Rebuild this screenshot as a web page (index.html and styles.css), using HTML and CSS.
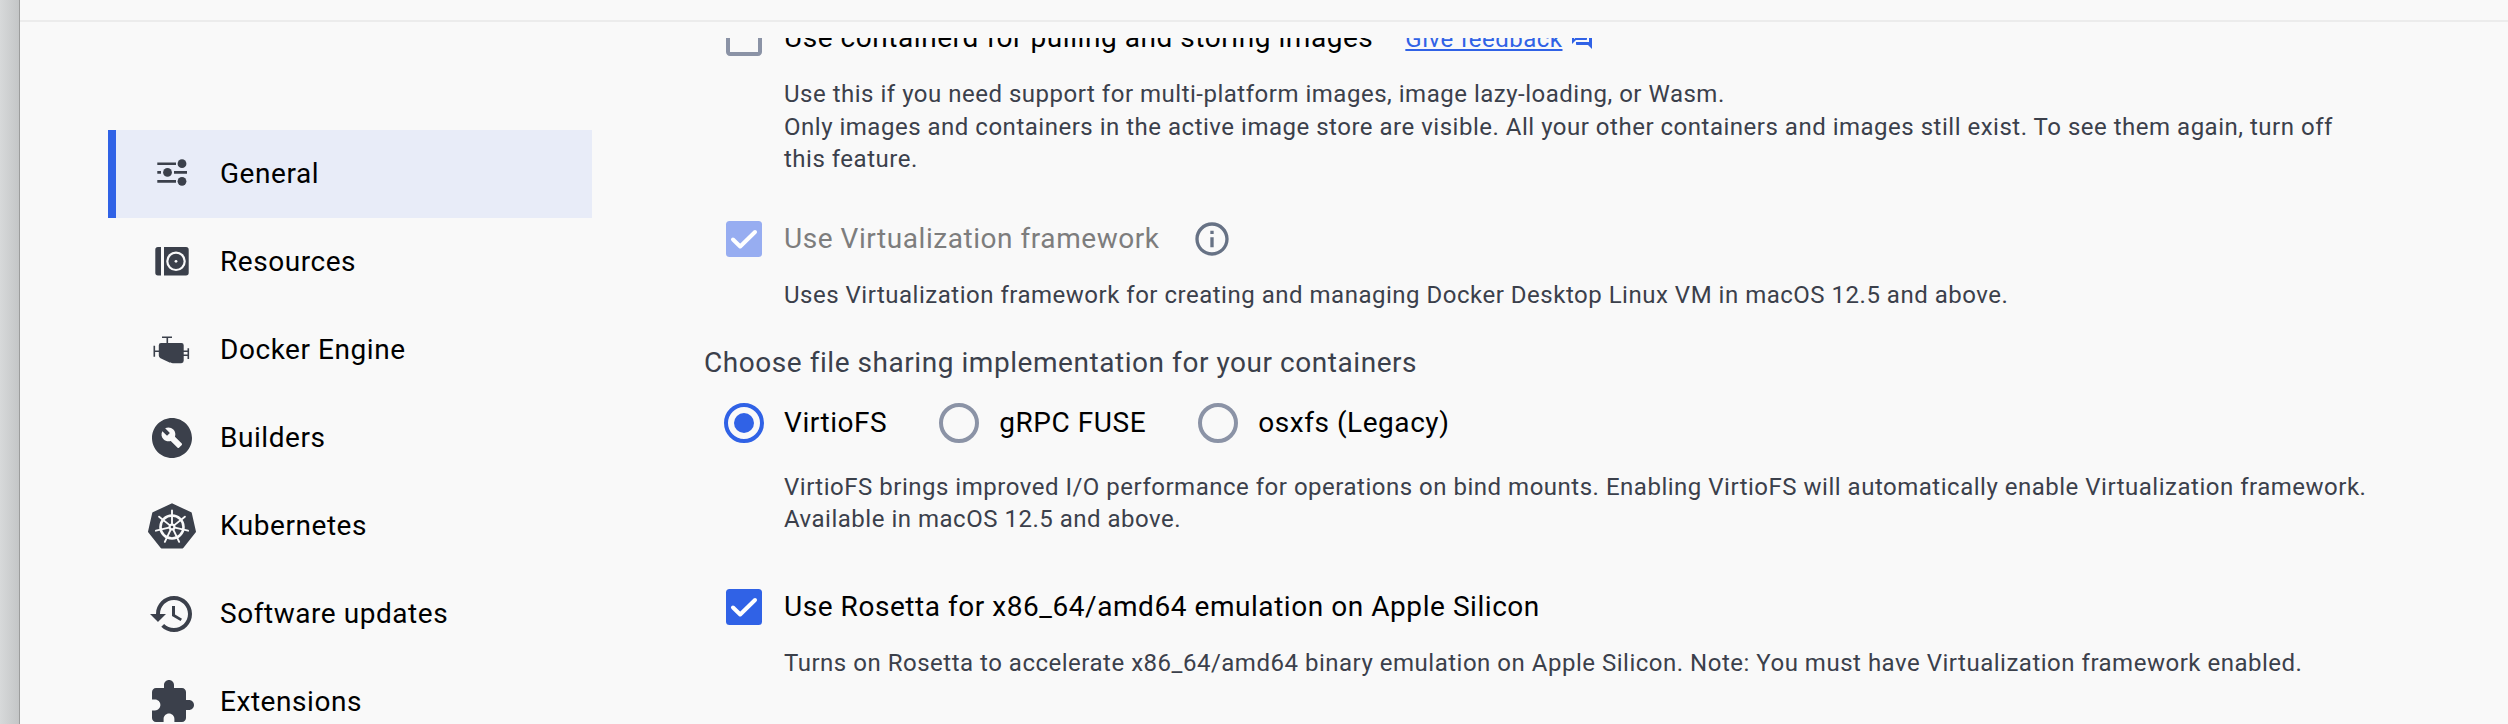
FILE: index.html
```html
<!DOCTYPE html>
<html lang="en">
<head>
<meta charset="utf-8">
<title>Settings</title>
<link rel="stylesheet" href="styles.css">
</head>
<body>
<div class="desktop"></div>
<div class="window">
  <header class="titlebar"></header>
  <div class="body">
    <nav class="nav">
      <a class="nav-item active"><span class="nav-icon"><svg viewBox="0 0 48 48" width="48" height="48"><g fill="#3b404b"><path d="M9.300 12.400H28v2.700H9.300zM9.300 30H28v2.700H9.300zM26 21.100h13v2.700H26zM9.300 21.100h3.700v2.700H9.300z"/><circle cx="34" cy="13.700" r="4.400"/><circle cx="19.500" cy="22.400" r="4.400"/><circle cx="34" cy="31.300" r="4.400"/></g></svg></span>General</a>
      <a class="nav-item"><span class="nav-icon"><svg viewBox="0 0 48 48" width="48" height="48"><g fill="#3b404b"><path d="M13 9v28.500h-3a2.700 2.700 0 0 1-2.700-2.700V11.700A2.700 2.700 0 0 1 10 9zM16 9h22a2.700 2.700 0 0 1 2.700 2.700v23.100a2.700 2.700 0 0 1-2.700 2.700H16z"/></g><circle cx="28" cy="23.300" r="8.700" fill="none" stroke="#f9f9fa" stroke-width="2.200"/><circle cx="28" cy="23.300" r="1.400" fill="#f9f9fa"/></svg></span>Resources</a>
      <a class="nav-item"><span class="nav-icon"><svg viewBox="0 0 48 48" width="48" height="48"><path fill="#3b404b" d="M13 17h20.500a2.200 2.200 0 0 1 2.200 2.200v15.600a2.400 2.400 0 0 1-2.400 2.400H25c-2 0-3-.4-4.500-1.200L12.500 32.200a3 3 0 0 1-1.700-2.700V19.200A2.200 2.200 0 0 1 13 17z"/><path fill="none" stroke="#3b404b" stroke-width="1.600" d="M14 11.300h10M19.300 11v7M6.300 19.700v11M6.300 25.200h5M40.300 22.300v10.800M35 25.300h5.300M35 29.300h5.300"/></svg></span>Docker Engine</a>
      <a class="nav-item"><span class="nav-icon"><svg viewBox="0 0 24 24" width="48" height="48"><path fill="#3b404b" fill-rule="evenodd" d="M12 2C6.480 2 2 6.480 2 12s4.480 10 10 10 10-4.480 10-10S17.520 2 12 2zm4.900 13.490-1.400 1.400c-.2.200-.51.200-.71 0l-3.410-3.410c-1.220.43-2.640.17-3.620-.81-1.110-1.110-1.300-2.790-.59-4.100l2.350 2.350 1.410-1.410-2.350-2.350c1.320-.71 2.990-.52 4.100.59.980.98 1.240 2.400.81 3.620l3.410 3.410c.19.190.19.510 0 .710z"/></svg></span>Builders</a>
      <a class="nav-item"><span class="nav-icon"><svg viewBox="0 0 48 48" width="48" height="48"><path fill="#3b404b" stroke="#3b404b" stroke-width="2" stroke-linejoin="round" d="M24 2.300 42.800 11.200 47 29.700 34.500 45.500H13.500L1 29.700 5.200 11.200z"/><g stroke="#f9f9fa" fill="none"><circle cx="24" cy="25" r="11.500" stroke-width="2.600"/><g stroke-width="1.900" stroke-linecap="round"><path id="spoke" d="M24 22V8.500"/><use href="#spoke" transform="rotate(51.430 24 25)"/><use href="#spoke" transform="rotate(102.860 24 25)"/><use href="#spoke" transform="rotate(154.290 24 25)"/><use href="#spoke" transform="rotate(205.710 24 25)"/><use href="#spoke" transform="rotate(257.140 24 25)"/><use href="#spoke" transform="rotate(308.570 24 25)"/></g></g><circle cx="24" cy="25" r="3.500" fill="#f9f9fa"/><circle cx="24" cy="25" r="1.300" fill="#3b404b"/></svg></span>Kubernetes</a>
      <a class="nav-item"><span class="nav-icon"><svg viewBox="0 0 24 24" width="48" height="48"><path fill="#3b404b" d="M13 3c-4.970 0-9 4.030-9 9H1l3.890 3.890.07.14L9 12H6c0-3.870 3.130-7 7-7s7 3.130 7 7-3.130 7-7 7c-1.930 0-3.680-.79-4.940-2.060l-1.420 1.420C8.270 19.990 10.510 21 13 21c4.970 0 9-4.030 9-9s-4.030-9-9-9zm-1 5v5l4.280 2.540.72-1.210-3.500-2.080V8H12z"/></svg></span>Software updates</a>
      <a class="nav-item"><span class="nav-icon"><svg viewBox="0 0 24 24" width="48" height="48"><path fill="#3b404b" d="M20.500 11H19V7c0-1.100-.9-2-2-2h-4V3.500C13 2.120 11.880 1 10.500 1S8 2.120 8 3.500V5H4c-1.100 0-1.990.9-1.990 2v3.800H3.500c1.490 0 2.700 1.210 2.700 2.700s-1.210 2.700-2.700 2.700H2V20c0 1.100.9 2 2 2h3.800v-1.500c0-1.490 1.210-2.700 2.700-2.700 1.490 0 2.700 1.210 2.700 2.700V22H17c1.100 0 2-.9 2-2v-4h1.500c1.380 0 2.500-1.120 2.500-2.500S21.880 11 20.500 11z"/></svg></span>Extensions</a>
    </nav>
    <main class="content">
      <div class="scrolled">
        <div class="option">
          <span class="control"><svg viewBox="0 0 24 24" width="48" height="48"><path fill="#8b93a6" d="M19 5v14H5V5h14m0-2H5c-1.100 0-2 .9-2 2v14c0 1.100.9 2 2 2h14c1.100 0 2-.9 2-2V5c0-1.100-.9-2-2-2z"/></svg></span>
          <span class="label">Use containerd for pulling and storing images</span>
          <a class="feedback"><span class="feedback-text">Give feedback</span><svg viewBox="0 0 24 24" width="24" height="24"><path fill="#3062e6" d="M15 4v7H5.170L4 12.170V4h11m1-2H3c-.55 0-1 .45-1 1v14l4-4h10c.55 0 1-.45 1-1V3c0-.55-.45-1-1-1zm5 4h-2v9H6v2c0 .55.450 1 1 1h11l4 4V7c0-.55-.45-1-1-1z"/></svg></a>
        </div>
        <p class="desc desc-store">Use this if you need support for multi-platform images, image lazy-loading, or Wasm.<br>Only images and containers in the active image store are visible. All your other containers and images still exist. To see them again, turn off<br>this feature.</p>
        <div class="option">
          <span class="control"><svg viewBox="0 0 48 48" width="48" height="48"><rect x="6" y="6" width="36" height="36" rx="3.500" fill="#97adf1"/><path fill="none" stroke="#fff" stroke-width="4" stroke-linecap="round" stroke-linejoin="round" d="m13 24.500 7.200 7L35 17"/></svg></span>
          <span class="label muted">Use Virtualization framework</span>
          <svg class="info" viewBox="0 0 24 24" width="40" height="40"><path fill="#677285" d="M11 7h2v2h-2zm0 4h2v6h-2zm1-9C6.480 2 2 6.480 2 12s4.480 10 10 10 10-4.480 10-10S17.520 2 12 2zm0 18c-4.410 0-8-3.590-8-8s3.590-8 8-8 8 3.590 8 8-3.590 8-8 8z"/></svg>
        </div>
        <p class="desc desc-virt">Uses Virtualization framework for creating and managing Docker Desktop Linux VM in macOS 12.5 and above.</p>
        <h2 class="group-title">Choose file sharing implementation for your containers</h2>
        <div class="option radios">
          <span class="radio"><span class="control"><svg viewBox="0 0 48 48" width="48" height="48"><circle cx="24" cy="24" r="18" fill="none" stroke="#3062e6" stroke-width="4"/><circle cx="24" cy="24" r="10" fill="#3062e6"/></svg></span><span class="label">VirtioFS</span></span>
          <span class="radio"><span class="control"><svg viewBox="0 0 48 48" width="48" height="48"><circle cx="24" cy="24" r="18" fill="none" stroke="#8b93a6" stroke-width="4"/></svg></span><span class="label">gRPC FUSE</span></span>
          <span class="radio"><span class="control"><svg viewBox="0 0 48 48" width="48" height="48"><circle cx="24" cy="24" r="18" fill="none" stroke="#8b93a6" stroke-width="4"/></svg></span><span class="label">osxfs (Legacy)</span></span>
        </div>
        <p class="desc desc-fs">VirtioFS brings improved I/O performance for operations on bind mounts. Enabling VirtioFS will automatically enable Virtualization framework.<br>Available in macOS 12.5 and above.</p>
        <div class="option">
          <span class="control"><svg viewBox="0 0 48 48" width="48" height="48"><rect x="6" y="6" width="36" height="36" rx="3.500" fill="#3062e6"/><path fill="none" stroke="#fff" stroke-width="4" stroke-linecap="round" stroke-linejoin="round" d="m13 24.500 7.200 7L35 17"/></svg></span>
          <span class="label">Use Rosetta for x86_64/amd64 emulation on Apple Silicon</span>
        </div>
        <p class="desc desc-rosetta">Turns on Rosetta to accelerate x86_64/amd64 binary emulation on Apple Silicon. Note: You must have Virtualization framework enabled.</p>
      </div>
    </main>
  </div>
</div>
</body>
</html>
```
FILE: styles.css
```css
* { box-sizing: border-box; }
body {
  margin: 0;
  width: 2508px;
  height: 724px;
  overflow: hidden;
  display: flex;
  background: #f9f9f9;
  font-family: Roboto, "Liberation Sans", sans-serif;
  color: #000;
}
.desktop {
  width: 20px;
  flex: none;
  background: linear-gradient(90deg, #d7d9da, #c4c6c7);
  border-right: 1px solid #9c9d9d;
}
.window { flex: 1; min-width: 0; display: flex; flex-direction: column; height: 724px; }
.titlebar { height: 22px; flex: none; border-bottom: 2px solid #ececec; }
.body { flex: 1; min-height: 0; display: flex; padding-top: 16px; }
.nav { width: 484px; margin: 92px 0 0 88px; flex: none; }
.nav-item {
  display: flex;
  align-items: center;
  height: 88px;
  padding: 0 0 1px 40px;
  font-size: 28px;
  letter-spacing: 0.55px;
}
.nav-item.active { background: #e8ecf8; border-left: 8px solid #3062e6; padding-left: 32px; }
.nav-icon { width: 48px; margin: 1px 24px 0 0; display: flex; }
svg { display: block; flex: none; }
.content { flex: 1; min-width: 0; margin-left: 112px; overflow: hidden; }
.scrolled { margin-top: -24px; }
.option { display: flex; align-items: center; height: 48px; padding-left: 16px; }
.control { width: 48px; margin-right: 16px; flex: none; }
.label { font-size: 28px; letter-spacing: 0.55px; line-height: 48px; white-space: nowrap; }
.muted { color: #7d7d7d; }
.info { margin-left: 32px; }
.feedback { display: flex; align-items: center; margin-left: 32px; padding-top: 2px; color: #3062e6; }
.feedback-text { font-size: 24px; letter-spacing: 0.5px; text-decoration: underline; }
.feedback svg { margin-left: 7px; }
.desc {
  margin: 0 0 0 80px;
  font-size: 24px;
  line-height: 32.500px;
  letter-spacing: 0.51px;
  color: #3b404b;
  white-space: nowrap;
}
.desc-store { padding-top: 16px; height: 153px; }
.desc-virt { padding-top: 16px; height: 76px; }
.group-title { margin: 0; height: 60px; font-size: 28px; font-weight: 400; line-height: 48px; letter-spacing: 0.55px; color: #3b404b; white-space: nowrap; }
.radio { display: flex; }
.radio + .radio { margin-left: 48px; }
.desc-fs { padding-top: 24px; height: 136px; line-height: 32px; }
.desc-rosetta { padding-top: 16px; }
```
